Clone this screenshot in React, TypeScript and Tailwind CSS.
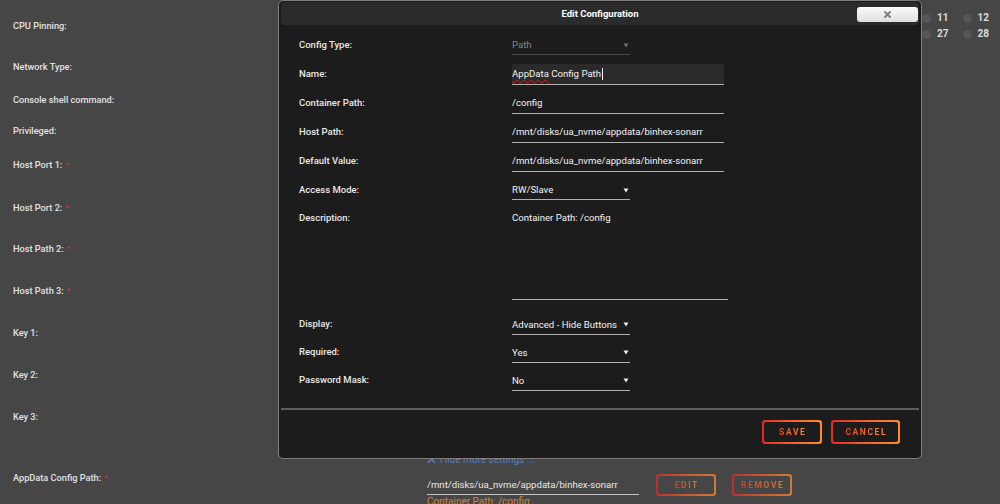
import React from "react";

function Req() {
  return <span className="relative -top-[1px] ml-[3px] text-[#c23a3a] text-[8px]">*</span>;
}

function BgRow({ h, label, req, children }: { h: string; label: string; req?: boolean; children?: React.ReactNode }) {
  return (
    <div className={`flex items-center ${h}`}>
      <span className="text-[9.2px] font-medium text-[#e2e2e2] leading-[12px]">
        {label}
        {req && <Req />}
      </span>
      {children}
    </div>
  );
}

function Arrow({ color = "#e8e8e8" }: { color?: string }) {
  return (
    <svg width="6" height="5" viewBox="0 0 6 5" className="shrink-0">
      <path d="M0.5 0.5 L5.5 0.5 L3 4.5 Z" fill={color} />
    </svg>
  );
}

function GradButton({ label, w, h, inner, dim }: { label: string; w: string; h: string; inner: string; dim?: boolean }) {
  return (
    <div className={`${w} ${h} rounded-[3px] p-[2px] bg-linear-to-r from-[#e22828] to-[#ff8c2f] ${dim ? "opacity-75" : ""}`}>
      <div className={`w-full h-full rounded-[2px] ${inner} flex items-center justify-center`}>
        <span className="text-[8.5px] font-bold tracking-[1.6px] pl-[1.6px] leading-[10px] bg-linear-to-r from-[#e8402a] to-[#ff8c2f] bg-clip-text text-transparent">
          {label}
        </span>
      </div>
    </div>
  );
}

function FormRow({ label, h = "h-[29px]", children }: { label: string; h?: string; children: React.ReactNode }) {
  return (
    <div className={`flex items-center ${h} pl-[18px]`}>
      <div className="w-[213px] shrink-0 text-[9.5px] font-medium text-[#e8e8e8] leading-[12px] pb-[2px]">{label}</div>
      {children}
    </div>
  );
}

function Input({ value, bg }: { value: React.ReactNode; bg?: boolean }) {
  return (
    <div
      className={`w-[212px] h-[21px] border-b border-[#b0b0b0] flex items-center text-[9.6px] leading-[12px] text-[#f2f2f2] ${
        bg ? "bg-[#2a2a2a]" : ""
      }`}
    >
      {value}
    </div>
  );
}

function Select({ value, disabled }: { value: string; disabled?: boolean }) {
  return (
    <div
      className={`w-[118px] h-[19px] border-b flex items-center justify-between pr-[1px] text-[9.6px] leading-[12px] ${
        disabled ? "border-[#474747] text-[#858585]" : "border-[#b0b0b0] text-[#f2f2f2]"
      }`}
    >
      <span>{value}</span>
      <Arrow color={disabled ? "#6f6f6f" : "#eeeeee"} />
    </div>
  );
}

function Pin({ n }: { n: string }) {
  return (
    <div className="flex items-center gap-[6px] h-[9px]">
      <span className="w-[9px] h-[9px] rounded-full bg-[#565656]" />
      <span className="text-[10px] font-bold text-[#dcdcdc] leading-[10px]">{n}</span>
    </div>
  );
}

export default function App() {
  return (
    <div className="relative w-[1000px] h-[504px] overflow-hidden bg-[#464646] font-[Roboto,'Noto_Sans',sans-serif]">
      {/* background form */}
      <div className="flex flex-col pl-[13px]">
        <BgRow h="h-[52px]" label="CPU Pinning:">
          <div className="ml-auto mr-[11px] grid grid-cols-[41px_26px] gap-y-[7px]">
            <Pin n="11" />
            <Pin n="12" />
            <Pin n="27" />
            <Pin n="28" />
          </div>
        </BgRow>
        <BgRow h="h-[30px]" label="Network Type:" />
        <BgRow h="h-[36px]" label="Console shell command:" />
        <BgRow h="h-[26px]" label="Privileged:" />
        <BgRow h="h-[42px]" label="Host Port 1:" req />
        <BgRow h="h-[44px]" label="Host Port 2:" req />
        <BgRow h="h-[38px]" label="Host Path 2:" req />
        <BgRow h="h-[46px]" label="Host Path 3:" req />
        <BgRow h="h-[38px]" label="Key 1:" />
        <BgRow h="h-[46px]" label="Key 2:" />
        <BgRow h="h-[38px]" label="Key 3:" />
        <div className="h-[30px] pt-[18px] pl-[414px]">
          <div className="flex items-center gap-[4px] text-[10px] leading-[12px] text-[#5b7cc4]">
            <svg width="9" height="7" viewBox="0 0 9 7">
              <path d="M1 6 L4.5 2 L8 6" stroke="#5b7cc4" strokeWidth="1.6" fill="none" />
            </svg>
            <span>Hide more settings ...</span>
          </div>
        </div>
        <div className="flex">
          <div className="w-[414px] pt-[6px] shrink-0 text-[9.2px] font-medium text-[#e2e2e2] leading-[12px]">
            <span>
              AppData Config Path:
              <Req />
            </span>
          </div>
          <div className="flex flex-col pt-[8px]">
            <div className="flex items-center">
              <div className="w-[212px] h-[19px] border-b border-[#c4c4c4] flex items-center text-[9.6px] leading-[12px] text-[#e6e6e6]">
                /mnt/disks/ua_nvme/appdata/binhex-sonarr
              </div>
              <div className="ml-[17px]">
                <GradButton label="EDIT" w="w-[60px]" h="h-[22px]" inner="bg-[#464646]" dim />
              </div>
              <div className="ml-[16px]">
                <GradButton label="REMOVE" w="w-[60px]" h="h-[22px]" inner="bg-[#464646]" dim />
              </div>
            </div>
            <div className="text-[10px] leading-[12px] text-[#c8873a]">Container Path: /config</div>
          </div>
        </div>
      </div>

      {/* modal */}
      <div className="absolute left-[278px] top-0 w-[644px] h-[459px] bg-[#1c1c1c] border border-[#7d7d7d] rounded-[5px] px-[2px] pt-[1px] flex flex-col">
        <div className="relative h-[23px] shrink-0 bg-[#2b2b2b] rounded-[4px] flex items-center justify-center">
          <span className="text-[9.5px] font-bold text-white leading-[12px]">Edit Configuration</span>
          <div className="absolute right-[1px] top-[5px] w-[61px] h-[15px] rounded-[3px] bg-linear-to-b from-[#fbfbfb] to-[#dedede] flex items-center justify-center">
            <svg width="7" height="7" viewBox="0 0 7 7">
              <path d="M1 1 L6 6 M6 1 L1 6" stroke="#7c7c7c" strokeWidth="1.8" strokeLinecap="round" />
            </svg>
          </div>
        </div>

        <div className="mt-[6px] flex flex-col">
          <FormRow label="Config Type:">
            <Select value="Path" disabled />
          </FormRow>
          <FormRow label="Name:">
            <Input
              bg
              value={
                <span className="flex items-center">
                  <span className="underline decoration-wavy decoration-[#d02020] decoration-1 underline-offset-[2px]">AppData</span>
                  <span>&nbsp;Config Path</span>
                  <span className="w-[1px] h-[12px] bg-white ml-[1px]" />
                </span>
              }
            />
          </FormRow>
          <FormRow label="Container Path:">
            <Input value="/config" />
          </FormRow>
          <FormRow label="Host Path:">
            <Input value="/mnt/disks/ua_nvme/appdata/binhex-sonarr" />
          </FormRow>
          <FormRow label="Default Value:">
            <Input value="/mnt/disks/ua_nvme/appdata/binhex-sonarr" />
          </FormRow>
          <FormRow label="Access Mode:">
            <Select value="RW/Slave" />
          </FormRow>
          <div className="flex pl-[18px]">
            <div className="w-[213px] shrink-0 pt-[7px] text-[9.5px] font-medium text-[#e8e8e8] leading-[12px]">Description:</div>
            <div className="mt-[3px] w-[216px] h-[92px] border-b border-[#b0b0b0] pt-[4px] text-[9.6px] leading-[12px] text-[#f2f2f2]">
              Container Path: /config
            </div>
          </div>
          <div className="mt-[11px]">
            <FormRow label="Display:" h="h-[28px]">
              <Select value="Advanced - Hide Buttons" />
            </FormRow>
            <FormRow label="Required:" h="h-[28px]">
              <Select value="Yes" />
            </FormRow>
            <FormRow label="Password Mask:" h="h-[28px]">
              <Select value="No" />
            </FormRow>
          </div>
          <div className="mt-[13px] h-[2px] bg-[#5e5e5e]" />
          <div className="mt-[10px] flex justify-end gap-[9px] pr-[19px]">
            <GradButton label="SAVE" w="w-[60px]" h="h-[24px]" inner="bg-[#1c1c1c]" />
            <GradButton label="CANCEL" w="w-[69px]" h="h-[24px]" inner="bg-[#1c1c1c]" />
          </div>
        </div>
      </div>
    </div>
  );
}
